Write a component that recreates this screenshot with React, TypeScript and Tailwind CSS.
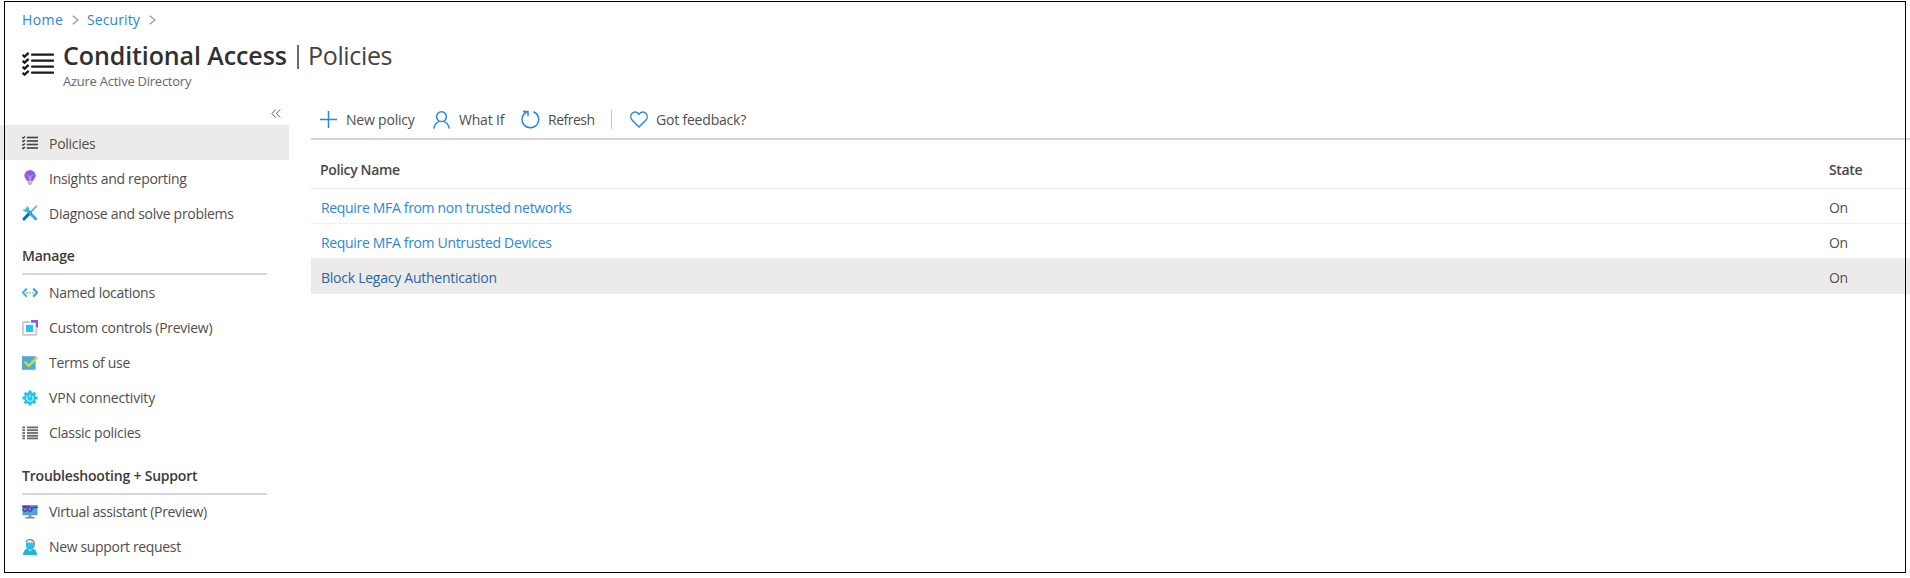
import type { ReactNode } from "react";

function ChecklistIcon({ className }: { className: string }) {
  return (
    <svg className={className} viewBox="0 0 32 24" fill="none" stroke="#1b1a19">
      {[3.5, 9.5, 15.5, 21.5].map((y) => (
        <g key={y}>
          <path d={`M0.6 ${y - 0.6}l2 1.7 4-3.8`} strokeWidth="2.3" />
          <path d={`M10 ${y - 0.8}H31`} strokeWidth="2.2" strokeLinecap="round" />
        </g>
      ))}
    </svg>
  );
}

function ListIcon() {
  return (
    <svg className="size-4" viewBox="0 0 16 16" fill="none" stroke="#4a4948">
      {[2.5, 6, 9.5, 13].map((y) => (
        <g key={y}>
          <path d={`M0.2 ${y}l1 .6 1.8-1.6`} strokeWidth="1.6" />
          <path d={`M4.8 ${y}H16`} strokeWidth="1.7" />
        </g>
      ))}
    </svg>
  );
}

function DenseListIcon() {
  return (
    <svg className="size-4" viewBox="0 0 16 16" fill="none" stroke="#6a6967">
      {[2.4, 5.2, 8, 10.8, 13.4].map((y) => (
        <g key={y}>
          <path d={`M0.3 ${y}H3`} strokeWidth="1.8" />
          <path d={`M5 ${y}H16`} strokeWidth="1.8" />
        </g>
      ))}
    </svg>
  );
}

function BulbIcon() {
  return (
    <svg className="size-4" viewBox="0 0 16 16">
      <path d="M8 0a5.700 5.700 0 0 0-5.700 5.600c0 2.700 2.200 3.700 2.800 5.600h5.800c.6-1.900 2.800-2.900 2.800-5.600A5.700 5.700 0 0 0 8 0z" fill="#8b5fe0" />
      <path d="M5.200 4.600 7.300 7v4M10.800 4.600 8.700 7v4M7 7h2" fill="none" stroke="#bb9cf2" strokeWidth="1" />
      <path d="M5.700 11.600h4.600v1.700L9 15H7l-1.300-1.700z" fill="#b9b5c0" />
    </svg>
  );
}

function ToolsIcon() {
  return (
    <svg className="size-4" viewBox="0 0 16 16" fill="none">
      <path d="M14.800.8 9 6.800" stroke="#5bb0dc" strokeWidth="1.700" />
      <path d="M8.200 7.600 2 14" stroke="#0f6cae" strokeWidth="3" strokeLinecap="round" />
      <path d="M4.500 4.500 13.600 13.800" stroke="#25b0e2" strokeWidth="3" strokeLinecap="round" />
      <path d="M4.300.9c2.700.4 3.700 3 2.300 5.300C4.400 7.600 1.400 6.900.9 4.200l2.300.6 1.700-1.600z" fill="#2bc2ee" />
    </svg>
  );
}

function LocationsIcon() {
  return (
    <svg className="size-4" viewBox="0 0 16 16" fill="none">
      <path d="M4.800 3.500.9 7.600l3.900 4.100" stroke="#3cb8f0" strokeWidth="2" />
      <path d="m11.200 3.500 3.900 4.100-3.900 4.100" stroke="#3c98e4" strokeWidth="2" />
      <g fill="#9ad157">
        <circle cx="5" cy="7.700" r="1" />
        <circle cx="8" cy="7.700" r="1" />
        <circle cx="11" cy="7.700" r="1" />
      </g>
    </svg>
  );
}

function ControlsIcon() {
  return (
    <svg className="size-4" viewBox="0 0 16 16" fill="none">
      <path d="M8 2H1.900A1 1 0 0 0 .9 3v10.900a1 1 0 0 0 1 1h11.400a1 1 0 0 0 1-1V8.500" stroke="#c8c8c8" strokeWidth="1.800" />
      <path d="M4 4.800h7.200V12H4z" fill="#22c6ee" />
      <path d="M9 1.400h6V7.500" stroke="#8d5bdc" strokeWidth="2.600" />
    </svg>
  );
}

function TermsIcon() {
  return (
    <svg className="size-4" viewBox="0 0 16 16" fill="none">
      <path d="M0 1.200h13.600v13.600H0z" fill="#4eaadb" />
      <path d="m2.600 6.800 4.100 4L15.500 2" stroke="#c6e04a" strokeWidth="2.300" />
    </svg>
  );
}

function GearIcon() {
  return (
    <svg className="size-4" viewBox="0 0 16 16" fill="none">
      <g stroke="#25c3ec" strokeWidth="3">
        <path d="M8 .4v15.200M.4 8h15.200M2.700 2.700l10.600 10.600M13.300 2.700 2.700 13.300" />
      </g>
      <circle cx="8" cy="8" r="5.900" fill="#25c3ec" />
      <path d="M5.600 6a3.200 3.200 0 1 0 4.800 0M8 4.500v3" stroke="#b5ecfa" strokeWidth="1.200" />
    </svg>
  );
}

function AssistantIcon() {
  return (
    <svg className="size-4" viewBox="0 0 16 16" fill="none">
      <path d="M.5 1h15v10.300H.5z" fill="#4fa3d4" />
      <path d="M0 2.600h7.500M9 5.500 12 3.300h4" stroke="#5b3aa6" strokeWidth="1.500" />
      <circle cx="3" cy="5.300" r="2" stroke="#5b3aa6" strokeWidth="1.200" />
      <circle cx="8" cy="5.300" r="2" stroke="#5b3aa6" strokeWidth="1.200" />
      <path d="M6.500 11.300h3v2h-3z" fill="#888" />
      <path d="M3.500 13h9v1.600h-9z" fill="#8b8b8b" />
    </svg>
  );
}

function SupportIcon() {
  return (
    <svg className="size-4" viewBox="0 0 16 16" fill="none">
      <path d="M1 16c.2-3.600 1.400-5.800 4.200-6.200h5.600c2.800.4 4 2.600 4.200 6.200z" fill="#20b5dc" />
      <path d="m5.800 10 2.200 2.600 2.200-2.600z" fill="#c4f0fb" />
      <path d="M4 3.500h7.500V7a3.750 3.750 0 0 1-7.500 0z" fill="#29c4ee" />
      <path d="M4 3C5.500-.3 11-.3 12.200 3.500V7L10.500 9" stroke="#8a8988" strokeWidth="1.400" />
    </svg>
  );
}

function NavItem({ icon, active, children }: { icon: ReactNode; active?: boolean; children: ReactNode }) {
  return (
    <a className={`flex h-[35px] w-[289px] shrink-0 items-center pl-[22px] ${active ? "bg-[#edebe9]" : ""}`}>
      {icon}
      <span className="ml-[11px]">{children}</span>
    </a>
  );
}

function NavHeading({ children }: { children: ReactNode }) {
  return (
    <h2 className="ml-[22px] flex h-[45px] w-[245px] items-center border-b-2 border-[#d6d6d6] pt-[9px] font-semibold tracking-[-0.2px] text-[#3b3a39]">
      {children}
    </h2>
  );
}

const policies = [
  { name: "Require MFA from non trusted networks", state: "On" },
  { name: "Require MFA from Untrusted Devices", state: "On" },
  { name: "Block Legacy Authentication", state: "On", selected: true },
];

function Crumb() {
  return (
    <svg className="h-[10px] w-[7px]" viewBox="0 0 7 10" fill="none" stroke="#999999" strokeWidth="1.200">
      <path d="M.7.7 6 5 .7 9.300" />
    </svg>
  );
}

export default function App() {
  return (
    <div className="relative h-[578px] w-[1910px] overflow-hidden bg-white font-['Open_Sans','Noto_Sans',sans-serif] text-[14px] leading-[20px] tracking-[-0.28px] text-[#4f4e4d]">
      <header className="h-[96px] pl-[22px]">
        <nav className="flex h-[30px] items-center pt-[9px] tracking-[0.1px] text-[#2b88d8]">
          <a className="w-[50px] tracking-[0.4px]">Home</a>
          <Crumb />
          <a className="ml-[8px] w-[62px]">Security</a>
          <Crumb />
        </nav>
        <div className="flex pt-[9px]">
          <ChecklistIcon className="mt-[13px] h-[24px] w-[32px]" />
          <div className="ml-[9px]">
            <h1 className="flex h-[32px] items-center text-[25px] text-[#323130]">
              <span className="w-[234px] font-semibold tracking-[-0.1px]">Conditional Access</span>
              <span className="mt-[3px] mr-[9px] h-[24px] w-[2px] bg-[#6a6a6a]" />
              <span className="tracking-[-0.35px] text-[#444342]">Policies</span>
            </h1>
            <p className="text-[13px] leading-[20px] tracking-[-0.25px] text-[#6a6866]">Azure Active Directory</p>
          </div>
        </div>
      </header>

      <div className="flex">
        <aside className="flex w-[311px] shrink-0 flex-col">
          <div className="flex h-[29px] items-center pl-[271px] pt-[5px]">
            <svg className="h-[9px] w-[10px]" viewBox="0 0 10 9" fill="none" stroke="#605e5c">
              <path d="M4.700.5.9 4.500l3.800 4M9.200.5 5.400 4.500l3.800 4" />
            </svg>
          </div>
          <div className="flex flex-col [&_span]:pt-[2px]">
            <NavItem icon={<ListIcon />} active>Policies</NavItem>
            <NavItem icon={<BulbIcon />}>Insights and reporting</NavItem>
            <NavItem icon={<ToolsIcon />}>Diagnose and solve problems</NavItem>
          </div>
          <NavHeading>Manage</NavHeading>
          <NavItem icon={<LocationsIcon />}>Named locations</NavItem>
          <NavItem icon={<ControlsIcon />}>Custom controls (Preview)</NavItem>
          <NavItem icon={<TermsIcon />}>Terms of use</NavItem>
          <NavItem icon={<GearIcon />}>
            <span className="tracking-[-0.18px]">VPN connectivity</span>
          </NavItem>
          <NavItem icon={<DenseListIcon />}>Classic policies</NavItem>
          <NavHeading>Troubleshooting + Support</NavHeading>
          <div className="-mt-px flex flex-col tracking-[-0.34px]">
            <NavItem icon={<AssistantIcon />}>Virtual assistant (Preview)</NavItem>
            <NavItem icon={<SupportIcon />}>New support request</NavItem>
          </div>
        </aside>

        <main className="flex-1">
          <div className="flex h-[44px] items-center border-b-2 border-[#d4d4d4] pt-[5px] pl-[9px] tracking-[-0.2px]">
            <svg className="h-[17px] w-[17px]" viewBox="0 0 17 17" fill="none" stroke="#2b88d8" strokeWidth="1.500">
              <path d="M8.500 0v17M0 8.500h17" />
            </svg>
            <span className="ml-[9px] w-[87px]">New policy</span>
            <svg className="h-[18px] w-[17px]" viewBox="0 0 17 18" fill="none" stroke="#2b88d8" strokeWidth="1.500">
              <circle cx="8.500" cy="5.700" r="4.900" />
              <path d="M.8 17.600c.5-3.800 2.500-5.800 5-7M16.200 17.600c-.5-3.800-2.500-5.800-5-7" />
            </svg>
            <span className="ml-[9px] w-[62px]">What If</span>
            <svg className="h-[19px] w-[19px]" viewBox="0 0 19 19" fill="none" stroke="#2b88d8" strokeWidth="1.500">
              <path d="M12.500 1.800A8.300 8.300 0 1 1 5.800 2M2 1.500h5v4.800" />
            </svg>
            <span className="ml-[8px] w-[63px] tracking-[-0.5px]">Refresh</span>
            <span className="h-[19px] w-px bg-[#c8c6c4]" />
            <svg className="ml-[18px] h-[17px] w-[18px]" viewBox="0 0 18 17" fill="none" stroke="#2b88d8" strokeWidth="1.500">
              <path d="M9 16 2 9C.5 7.300.4 4.300 2 2.500 3.900.5 7 .5 9 3.300 11 .5 14.100.5 16 2.500c1.600 1.800 1.500 4.800 0 6.500z" />
            </svg>
            <span className="ml-[8px]">Got feedback?</span>
          </div>
          <div className="flex h-[49px] items-center border-b border-[#e6e6e6] pt-[12px] pl-[9px] font-semibold tracking-[-0.35px] text-[#484746]">
            <span className="w-[1509px]">Policy Name</span>
            <span>State</span>
          </div>
          {policies.map((p) => (
            <div
              key={p.name}
              className={`flex h-[35px] items-center pl-[10px] ${p.selected ? "bg-[#edebe9] pt-[2px]" : "border-b border-[#f0f0f0] pt-[3px]"}`}
            >
              <a className={`w-[1508px] ${p.selected ? "tracking-[-0.25px] text-[#2567a8]" : "tracking-[-0.33px] text-[#2b88d8]"}`}>
                {p.name}
              </a>
              <span>{p.state}</span>
            </div>
          ))}
        </main>
      </div>
      <div className="pointer-events-none absolute top-[1px] left-[4px] h-[572px] w-[1902px] border border-black" />
    </div>
  );
}
